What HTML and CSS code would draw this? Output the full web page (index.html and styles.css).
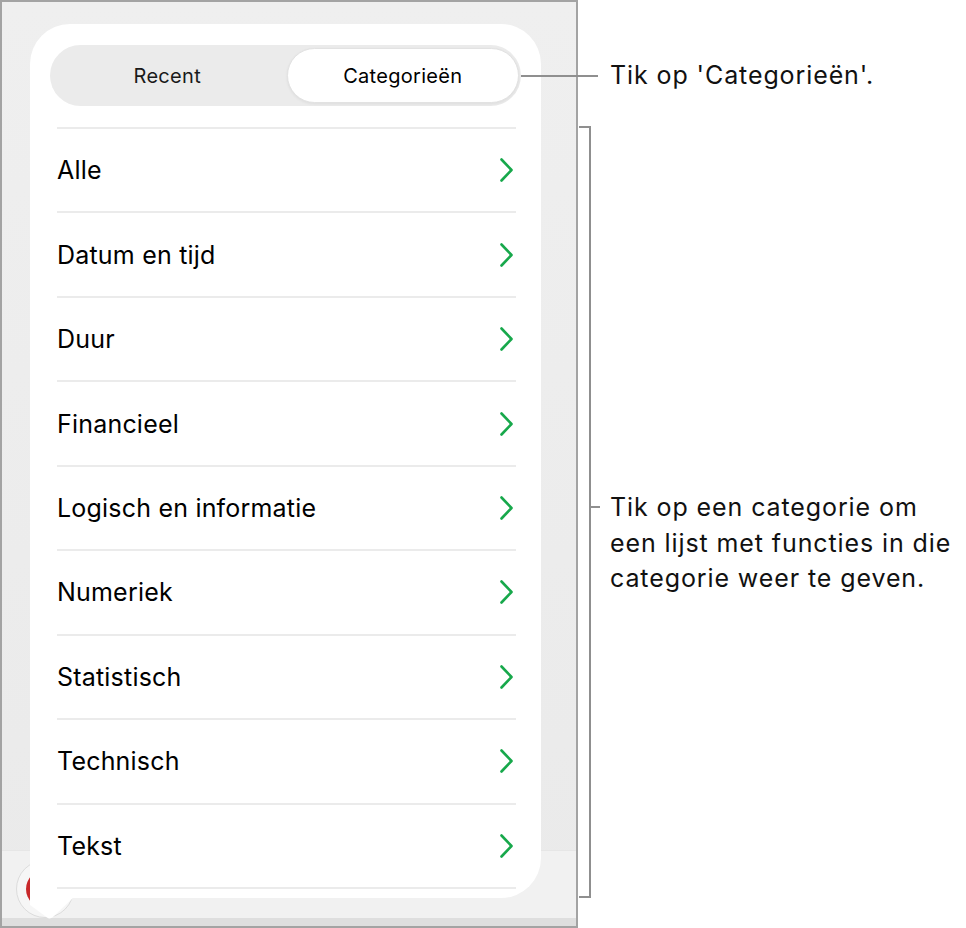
FILE: index.html
```html
<!DOCTYPE html>
<html lang="nl">
<head>
    <meta charset="UTF-8">
    <title>Functies - Categorieën</title>
    <link rel="stylesheet" href="styles.css">
</head>
<body>
    <div class="figure">
        <div class="device">
            <div class="toolbar">
                <div class="round-btn"><span class="dot"></span></div>
            </div>
            <div class="panel">
                <div class="segments">
                    <span class="seg">Recent</span>
                    <span class="seg active">Categorieën</span>
                </div>
                <ul class="list">
                    <li>Alle<svg class="chev" viewBox="0 0 13 24"><polyline points="1.5,1.5 11.5,12 1.5,22.5"/></svg></li>
                    <li>Datum en tijd<svg class="chev" viewBox="0 0 13 24"><polyline points="1.5,1.5 11.5,12 1.5,22.5"/></svg></li>
                    <li>Duur<svg class="chev" viewBox="0 0 13 24"><polyline points="1.5,1.5 11.5,12 1.5,22.5"/></svg></li>
                    <li>Financieel<svg class="chev" viewBox="0 0 13 24"><polyline points="1.5,1.5 11.5,12 1.5,22.5"/></svg></li>
                    <li>Logisch en informatie<svg class="chev" viewBox="0 0 13 24"><polyline points="1.5,1.5 11.5,12 1.5,22.5"/></svg></li>
                    <li>Numeriek<svg class="chev" viewBox="0 0 13 24"><polyline points="1.5,1.5 11.5,12 1.5,22.5"/></svg></li>
                    <li>Statistisch<svg class="chev" viewBox="0 0 13 24"><polyline points="1.5,1.5 11.5,12 1.5,22.5"/></svg></li>
                    <li>Technisch<svg class="chev" viewBox="0 0 13 24"><polyline points="1.5,1.5 11.5,12 1.5,22.5"/></svg></li>
                    <li>Tekst<svg class="chev" viewBox="0 0 13 24"><polyline points="1.5,1.5 11.5,12 1.5,22.5"/></svg></li>
                </ul>
                <!-- popover tail pointing at the button -->
                <svg class="tail" viewBox="0 0 44 21"><path d="M0 0 L0 7 L17 19.5 Q20 21.5 23 19 L43 0 Z"/></svg>
            </div>
        </div>

        <div class="callout callout-tab">
            <span class="leader"></span>
            <p>Tik op 'Categorieën'.</p>
        </div>
        <div class="callout callout-list">
            <span class="bracket"></span>
            <span class="tick"></span>
            <p>Tik op een categorie om<br>een lijst met functies in die<br>categorie weer te geven.</p>
        </div>
    </div>
</body>
</html>
```

FILE: styles.css
```css
*{
    margin: 0;
    padding: 0;
}
body{
    background-color: white;
    font-family: Inter, "Liberation Sans", sans-serif;
    color: #111;
}
.figure{
    width: 966px;
    height: 928px;
    position: relative;
    display: flex;
}

/* phone frame */
.device{
    width: 578px;
    height: 928px;
    box-sizing: border-box;
    border: 2px solid #a3a3a3;
    background: linear-gradient(#efefef, #eaeaea);
    display: grid;
}
.device > *{
    grid-area: 1 / 1;
}
.toolbar{
    align-self: end;
    height: 76px;
    box-sizing: border-box;
    background-color: #f1f1f1;
    border-top: 1px solid #e6e6e6;
    border-bottom: 8px solid #dedede;
    padding: 9px 0 0 14px;
}
.round-btn{
    width: 58px;
    height: 58px;
    box-sizing: border-box;
    border-radius: 50%;
    border: 1px solid #dcdcdc;
    background-color: #f6f6f6;
    display: flex;
    align-items: center;
    justify-content: center;
}
.round-btn .dot{
    width: 38px;
    height: 38px;
    border-radius: 50%;
    background-color: #c8282a;
}

/* popover */
.panel{
    align-self: start;
    justify-self: start;
    position: relative;
    margin: 22px 0 0 28px;
    width: 511px;
    height: 874px;
    box-sizing: border-box;
    padding: 21px 20px 0 20px;
    background-color: white;
    border-radius: 40px 40px 40px 0;
}
.tail{
    position: absolute;
    left: 0;
    top: 100%;
    width: 44px;
    height: 21px;
    display: block;
}
.tail path{
    fill: white;
}
.segments{
    height: 61px;
    box-sizing: border-box;
    padding: 3px 2px;
    border-radius: 31px;
    background-color: #ebebeb;
    display: flex;
    gap: 4px;
}
.seg{
    flex: 1;
    display: flex;
    align-items: center;
    justify-content: center;
    font-size: 20px;
    letter-spacing: 0.3px;
    color: #1a1a1a;
    border-radius: 28px;
}
.seg.active{
    background-color: white;
    border: 1px solid #e2e2e2;
    box-shadow: 0 1px 3px rgba(0, 0, 0, 0.06);
    color: #000;
}
.list{
    list-style: none;
    margin: 21px 5px 0 7px;
    border-bottom: 2px solid #ebebeb;
}
.list li{
    height: 84.44px;
    box-sizing: border-box;
    border-top: 2px solid #ebebeb;
    display: flex;
    align-items: center;
    justify-content: space-between;
    padding-right: 3px;
    font-size: 25px;
    letter-spacing: 0.2px;
    color: #000;
}
.chev{
    width: 13px;
    height: 24px;
}
.chev polyline{
    fill: none;
    stroke: #17a84b;
    stroke-width: 2.6;
    stroke-linecap: round;
    stroke-linejoin: round;
}

/* annotations */
.callout{
    position: absolute;
    display: flex;
    align-items: center;
}
.callout p{
    font-size: 25px;
    letter-spacing: 0.9px;
    line-height: 35.5px;
    color: #111;
}
.callout-tab{
    left: 521px;
    top: 58px;
    height: 36px;
}
.callout-tab .leader{
    width: 77px;
    height: 2px;
    background-color: #8f8f8f;
    margin-right: 12px;
}
.callout-list{
    left: 579px;
    top: 126px;
    height: 772px;
    align-items: stretch;
}
.bracket{
    width: 10px;
    border: 2px solid #8f8f8f;
    border-left: none;
}
.tick{
    align-self: flex-start;
    width: 9px;
    height: 2px;
    margin-top: 380px;
    background-color: #8f8f8f;
}
.callout-list p{
    align-self: flex-start;
    margin-top: 364px;
    margin-left: 10px;
}
```
